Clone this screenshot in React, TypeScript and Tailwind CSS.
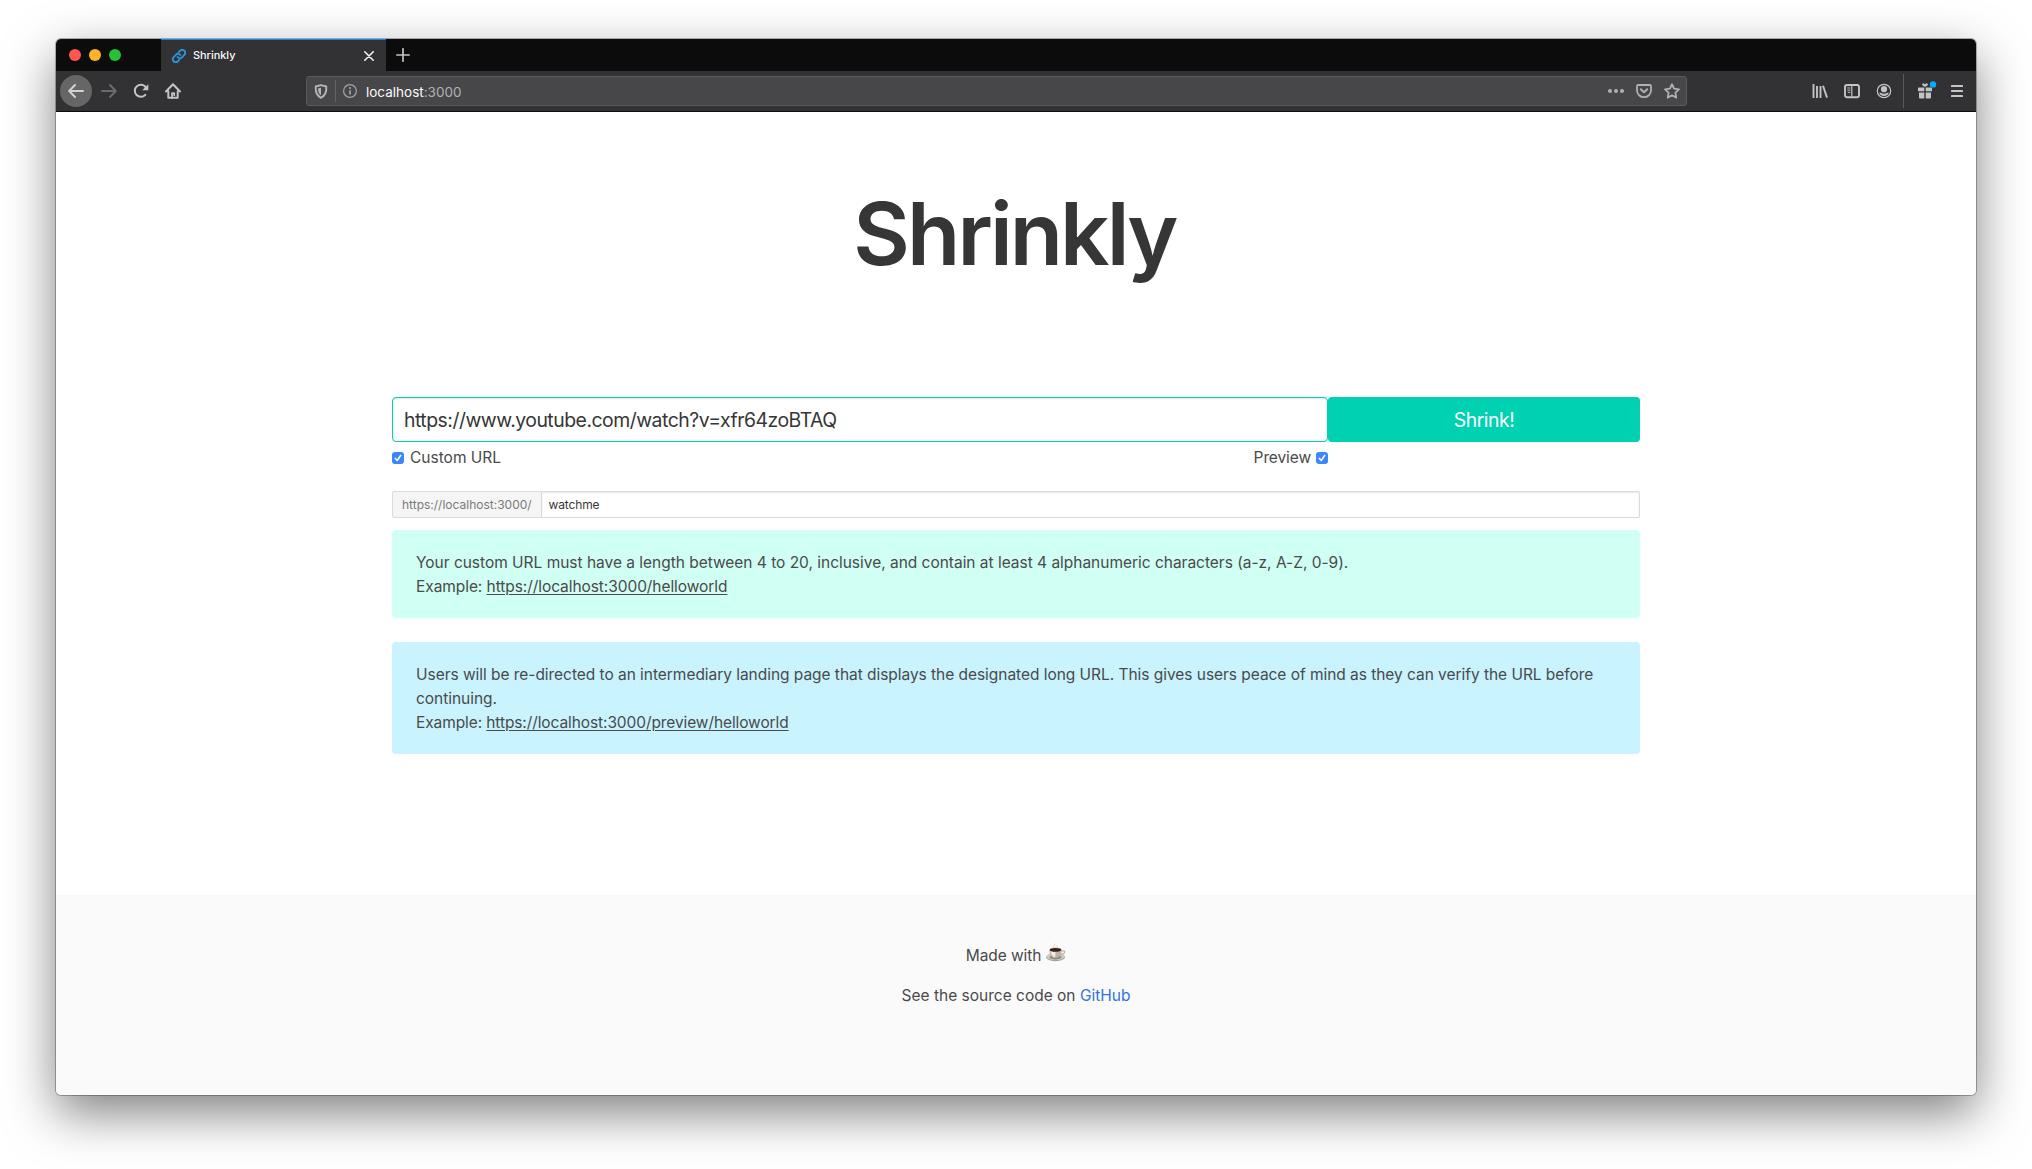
function LinkIcon() {
  return (
    <svg width="14" height="14" viewBox="0 0 24 24" fill="none" stroke="#2a93dd" strokeWidth="3.200" strokeLinecap="round">
      <path d="M9.500 13.800a5 5 0 0 0 7.600.400l4-4a5 5 0 0 0-7.200-7.200l-2.500 2.500" />
      <path d="M14.500 10.200a5 5 0 0 0-7.600-.400l-4 4a5 5 0 0 0 7.200 7.200l2.500-2.500" />
    </svg>
  );
}

const ic = { width: 16, height: 16, viewBox: "0 0 16 16", fill: "none", className: "block shrink-0" } as const;

function BackIcon() {
  return (
    <svg {...ic} stroke="#d2d2d3" strokeWidth="2" strokeLinecap="round" strokeLinejoin="round">
      <path d="M15 8H1.500M7 2L1.200 8L7 14" />
    </svg>
  );
}

function ForwardIcon() {
  return (
    <svg {...ic} stroke="#6b6b6d" strokeWidth="1.900" strokeLinecap="round" strokeLinejoin="round">
      <path d="M1 8H14.500M9 2L14.800 8L9 14" />
    </svg>
  );
}

function ReloadIcon() {
  return (
    <svg {...ic}>
      <path d="M12.300 11.800A6 6 0 1 1 12.600 4.200" stroke="#c4c4c5" strokeWidth="2" strokeLinecap="round" />
      <path d="M15.300 1.200V7.300H9.200Z" fill="#c4c4c5" />
    </svg>
  );
}

function HomeIcon() {
  return (
    <svg {...ic} stroke="#c4c4c5" strokeWidth="2" strokeLinejoin="round" strokeLinecap="round">
      <path d="M1 8.500L8 1.300L15 8.500M3.300 8.200V14.800H12.700V8.200" />
      <path d="M7 15V10.200H9.200V12.200" strokeWidth="1.800" />
    </svg>
  );
}

function ShieldIcon() {
  return (
    <svg width="14" height="15" viewBox="0 0 14 15" fill="none" className="block shrink-0">
      <path d="M7 1.200L12.300 2.500C12.700 8 11.300 11.600 7 13.800C2.700 11.600 1.300 8 1.700 2.500Z" stroke="#b5b5b6" strokeWidth="1.900" strokeLinejoin="round" />
      <path d="M7 3.700L4 4.400C4 7.500 4.800 9.900 7 11.300Z" fill="#b5b5b6" />
    </svg>
  );
}

function InfoIcon() {
  return (
    <svg width="14" height="14" viewBox="0 0 14 14" fill="none" className="block shrink-0">
      <circle cx="7" cy="7" r="6.400" stroke="#a5a5a6" strokeWidth="1.200" />
      <path d="M7 6.200V10.500" stroke="#a5a5a6" strokeWidth="1.700" />
      <circle cx="7" cy="4" r="1" fill="#a5a5a6" />
    </svg>
  );
}

function PocketIcon() {
  return (
    <svg {...ic} stroke="#b0b0b1" strokeLinecap="round" strokeLinejoin="round">
      <path d="M2.300 2H13.700Q15 2 15 3.200V7.500A7 6.700 0 0 1 1 7.500V3.200Q1 2 2.300 2Z" strokeWidth="1.800" />
      <path d="M4.800 6.300L8 9.300L11.200 6.300" strokeWidth="2" />
    </svg>
  );
}

function StarIcon() {
  return (
    <svg {...ic} stroke="#b0b0b1" strokeWidth="1.800" strokeLinejoin="round">
      <path d="M8 1.200L10.100 5.700L15 6.300L11.400 9.700L12.300 14.600L8 12.200L3.700 14.600L4.600 9.700L1 6.300L5.900 5.700Z" />
    </svg>
  );
}

function LibraryIcon() {
  return (
    <svg {...ic} stroke="#c4c4c5" strokeWidth="1.900">
      <path d="M1.500 1V15M5 3V15M8.500 3V15" />
      <path d="M11 2.800L15 14.600" />
    </svg>
  );
}

function SidebarIcon() {
  return (
    <svg {...ic} stroke="#c4c4c5">
      <rect x="1" y="2" width="14" height="12.200" rx="2" strokeWidth="1.900" />
      <path d="M7.800 2V14" strokeWidth="1.200" />
      <path d="M3.300 5H6.300M3.300 7.200H6.300M3.800 9.400H6.300" strokeWidth="1" />
    </svg>
  );
}

function AccountIcon() {
  return (
    <svg {...ic}>
      <circle cx="8" cy="8" r="6.700" stroke="#c4c4c5" strokeWidth="1.200" />
      <circle cx="8" cy="6.200" r="3.100" fill="#c4c4c5" />
      <path d="M3.200 9.800Q5.200 9.600 6 10.200Q8 11.200 10 10.200Q10.800 9.600 12.800 9.800Q11.400 13 8 13Q4.600 13 3.200 9.800Z" fill="#c4c4c5" />
    </svg>
  );
}

function GiftIcon() {
  return (
    <svg width="20" height="18" viewBox="0 0 20 18" className="block shrink-0">
      <g fill="#c4c4c5">
        <path d="M1 7.500Q1 6.500 2 6.500H7.300V10.200H1ZM8.700 6.500H14Q15 6.500 15 7.500V10.200H8.700ZM2 11.500H7.300V17.500H3Q2 17.500 2 16.500ZM8.700 11.500H14V16.500Q14 17.500 13 17.500H8.700Z" />
        <path d="M8 6L5.200 4.200Q4.800 2.200 6.500 2.300Q7.600 2.400 8 3.600Q8.400 2.400 9.500 2.300Q11.200 2.200 10.800 4.200Z" />
      </g>
      <circle cx="16" cy="3.400" r="3.200" fill="#00adff" />
    </svg>
  );
}

function CupIcon() {
  return (
    <svg width="20" height="19" viewBox="0 0 20 19" className="-mt-px block shrink-0">
      <path d="M8.500 5Q6.800 3.600 8.300 2.400Q9.200 1.600 8.700.6M10.800 4.600Q12 3.400 10.500 2.200" stroke="#d0d0d0" strokeWidth=".9" fill="none" />
      <ellipse cx="9.500" cy="14.300" rx="9.300" ry="3.900" fill="#9c968d" />
      <ellipse cx="9.500" cy="13.600" rx="9.200" ry="3.600" fill="#cfcac2" />
      <ellipse cx="9.500" cy="14.300" rx="6" ry="2.200" fill="#8d867c" />
      <path d="M15 8.200Q19.200 7 18.700 9.300Q18 11.400 14 11.600" stroke="#b9b3aa" strokeWidth="1.200" fill="none" />
      <path d="M3.300 6.700Q3.200 14.800 9.500 15Q15.900 14.800 15.700 6.700Z" fill="#b8b2a8" />
      <path d="M4.500 8Q5 13.500 9 14.400Q9.500 12 9.500 8.500Z" fill="#eeebe6" />
      <ellipse cx="9.500" cy="6.700" rx="6.300" ry="2.300" fill="#cdc7be" />
      <ellipse cx="9.500" cy="6.900" rx="5.700" ry="1.900" fill="#3a2116" />
    </svg>
  );
}

function Check({ label }: { label: string }) {
  return (
    <span role="checkbox" aria-checked="true" aria-label={label} className="flex size-3 shrink-0 items-center justify-center rounded-[3px] bg-[#3b86fb]">
      <svg width="12" height="12" viewBox="0 0 12 12" fill="none" stroke="#fff" strokeWidth="1.600" strokeLinecap="round" strokeLinejoin="round">
        <path d="M3.400 6.400L5.200 8.500L8.700 3.400" />
      </svg>
    </span>
  );
}

function TabBar() {
  return (
    <div className="flex h-8 bg-[#0c0c0d]">
      <div className="flex w-[105px] items-center gap-2 pl-[13px]">
        <span className="size-3 rounded-full bg-[#ff5650]" />
        <span className="size-3 rounded-full bg-[#fdb429]" />
        <span className="size-3 rounded-full bg-[#27c137]" />
      </div>
      <div className="flex w-[225px] items-center border-t border-[#0a84ff] bg-[#323234] pl-[11px] pr-3">
        <LinkIcon />
        <span className="ml-[7px] flex-1 text-[11px] font-medium tracking-[-0.05px] text-[#f9f9fa]">Shrinkly</span>
        <svg width="10" height="10" viewBox="0 0 10 10" stroke="#f0f0f1" strokeWidth="1.600" strokeLinecap="round">
          <path d="M.8.8L9.200 9.200M9.200.8L.8 9.200" />
        </svg>
      </div>
      <div className="flex items-center pl-[10px]">
        <svg width="14" height="14" viewBox="0 0 14 14" stroke="#c4c4c5" strokeWidth="1.700" strokeLinecap="round">
          <path d="M7 .8V13.200M.8 7H13.200" />
        </svg>
      </div>
    </div>
  );
}

function Toolbar() {
  return (
    <div className="flex h-[41px] items-center border-b border-[#0c0c0d] bg-[#323234]">
      <div className="flex w-[250px] items-center pl-1">
        <span className="flex size-8 items-center justify-center rounded-full bg-[#666667]">
          <BackIcon />
        </span>
        <span className="ml-[9px] flex gap-4">
          <ForwardIcon />
          <ReloadIcon />
          <HomeIcon />
        </span>
      </div>
      <div className="flex h-[30px] w-[1381px] items-center rounded-[3px] border border-[#5a5a5c] bg-[#474749] pl-[7px] pr-1.5">
        <ShieldIcon />
        <span className="ml-[7px] h-[22px] w-px bg-[#646466]" />
        <span className="ml-[7px]"><InfoIcon /></span>
        <span className="ml-[9px] flex-1 pt-[3px] text-[13.5px] text-[#b1b1b3]">
          <span className="text-[#f9f9fa]">localhost</span>:3000
        </span>
        <div className="flex items-center gap-3">
          <svg {...ic} fill="#b0b0b1">
            <circle cx="2" cy="8" r="2" />
            <circle cx="8" cy="8" r="2" />
            <circle cx="14" cy="8" r="2" />
          </svg>
          <PocketIcon />
          <StarIcon />
        </div>
      </div>
      <div className="ml-[125px] flex items-center gap-4">
        <LibraryIcon />
        <SidebarIcon />
        <AccountIcon />
      </div>
      <span className="ml-[11px] h-[34px] w-px bg-[#5a5a5c]" />
      <span className="-mt-[3px] ml-[13px]"><GiftIcon /></span>
      <svg width="12" height="12" viewBox="0 0 12 12" fill="#c4c4c5" className="ml-[14px]">
        <rect width="12" height="2" rx=".6" />
        <rect y="5" width="12" height="2" rx=".6" />
        <rect y="10" width="12" height="2" rx=".6" />
      </svg>
    </div>
  );
}

export default function App() {
  return (
    <div className="h-[1169px] w-[2032px] overflow-hidden bg-white px-14 pt-[39px] font-[Inter,'Liberation_Sans',sans-serif] text-[#4a4a4a]">
      <div className="flex h-[1056px] w-[1920px] flex-col overflow-hidden rounded-[5px] bg-white shadow-[0_0_0_1px_rgba(0,0,0,0.28),0_18px_50px_rgba(0,0,0,0.5)]">
        <TabBar />
        <Toolbar />
        <main className="mx-auto flex h-[783px] w-[1248px] flex-col">
          <h1 className="h-[285px] pr-[3px] pt-[66px] text-center text-[87px] leading-[112px] font-semibold tracking-[-2.9px] text-[#363636]">Shrinkly</h1>
          <div className="flex h-[45px]">
            <div className="flex w-[936px] items-center rounded border border-[#00d1b2] px-[11px] pt-0.5 text-[19.4px] tracking-[-0.49px] text-[#363636] shadow-[inset_0_1px_2px_rgba(10,10,10,0.1)]">https://www.youtube.com/watch?v=xfr64zoBTAQ</div>
            <button className="w-[312px] rounded bg-[#00d1b2] pt-0.5 text-[19.4px] tracking-[-0.48px] text-white">Shrink!</button>
          </div>
          <div className="mt-1 flex h-6 w-[936px] items-center justify-between text-[15.5px] leading-6">
            <span className="flex items-center gap-1.5"><Check label="Custom URL" />Custom URL</span>
            <span className="flex items-center gap-[5px] tracking-[-0.1px]">Preview<Check label="Preview" /></span>
          </div>
          <div className="mt-[21px] flex h-[27px] text-[12px]">
            <span className="flex w-[150px] items-center rounded-l-[2px] border border-[#dbdbdb] bg-[#f5f5f5] pl-[9px] text-[#7a7a7a]">https://localhost:3000/</span>
            <span className="flex flex-1 items-center rounded-r-[2px] border border-l-0 border-[#dbdbdb] pl-[6.5px] tracking-[-0.12px] text-[#363636] shadow-[inset_0_1px_2px_rgba(10,10,10,0.1)]">watchme</span>
          </div>
          <div className="mt-3 h-[88px] rounded bg-[#d0fff4] px-6 pt-[21px] text-[15.5px] leading-6 tracking-[-0.02px]">
            <p>Your custom URL must have a length between 4 to 20, inclusive, and contain at least 4 alphanumeric characters (a-z, A-Z, 0-9).</p>
            <p className="tracking-[-0.07px]">Example: <a className="underline underline-offset-2">https://localhost:3000/helloworld</a></p>
          </div>
          <div className="mt-6 h-[112px] rounded bg-[#c8f3ff] px-6 pt-[21px] text-[15.5px] leading-6 tracking-[-0.04px]">
            <p className="-mr-5">Users will be re-directed to an intermediary landing page that displays the designated long URL. This gives users peace of mind as they can verify the URL before<br />continuing.</p>
            <p className="tracking-[-0.1px]">Example: <a className="underline underline-offset-2">https://localhost:3000/preview/helloworld</a></p>
          </div>
        </main>
        <footer className="flex h-[200px] flex-col items-center gap-4 bg-[#fafafa] pt-[49px] text-[15.5px] leading-6">
          <p className="flex gap-[5px] tracking-[-0.08px]">Made with<CupIcon /></p>
          <p>See the source code on <a className="text-[#3273dc]">GitHub</a></p>
        </footer>
      </div>
    </div>
  );
}
